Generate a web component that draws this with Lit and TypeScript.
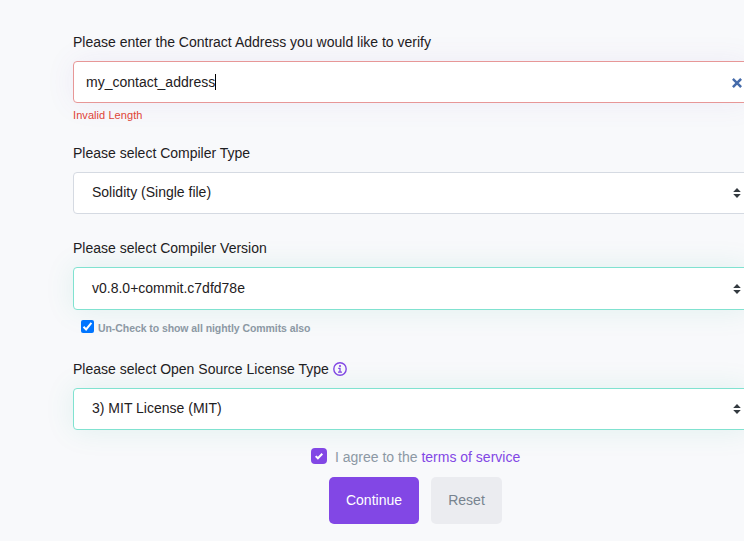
import { LitElement, html, css } from "lit";
import { customElement } from "lit/decorators.js";

@customElement("app-root")
export class AppRoot extends LitElement {
  static styles = css`
    :host { display: block; width: 100%; height: 541px; overflow: hidden; background: #f8f9fb; font: 14px/20px "Liberation Sans", Arial, sans-serif; color: #1e2022; }
    * { box-sizing: border-box; }
    form { display: flex; flex-direction: column; width: 677px; margin-left: 73px; padding-top: 32px; }
    .label { display: flex; align-items: center; height: 20px; white-space: nowrap; }
    .t { white-space: nowrap; }
    .box { display: flex; align-items: center; justify-content: space-between; height: 42px; margin-top: 9px; border: 1px solid #d5dae2; border-radius: 4px; background: #fff; padding: 0 8px 0 18px; white-space: nowrap; }
    .box svg { flex: none; }
    .choice { padding-bottom: 2px; }
    .address { padding: 0 7px 0 12px; border-color: #e79797; box-shadow: 0 0 30px rgba(119, 80, 190, 0.08); }
    .clear { margin-top: 2px; }
    .value { display: flex; align-items: center; }
    .caret { width: 1px; height: 16px; background: #000; }
    .valid { border-color: #80e2d0; box-shadow: 0 0 30px rgba(0, 160, 125, 0.1); }
    .version { height: 43px; }
    .error { height: 16px; margin: 4px 0 20px; font-size: 11px; line-height: 16px; letter-spacing: 0.07px; color: #de4437; }
    .type { margin-bottom: 24px; }
    .nightly { display: flex; align-items: center; gap: 4px; height: 16px; margin: 9px 0 24px 8px; font-size: 10.5px; letter-spacing: -0.07px; font-weight: 700; color: #8c98a4; }
    .nightly svg { margin-top: -1px; }
    .nightly .t { padding-top: 2px; }
    .info { margin-left: 4px; }
    .agree { display: flex; align-items: center; gap: 8px; height: 20px; margin: 17px 0 0 238px; color: #8c98a4; }
    .agree .tick { margin-top: -2px; }
    a { color: #8247e5; }
    .actions { display: flex; gap: 12px; margin: 10px 0 0 256px; }
    button { height: 47px; border: 0; border-radius: 5px; padding: 0 0 2px; font: inherit; }
    .primary { width: 90px; background: #8247e5; color: #fff; }
    .secondary { width: 71px; background: #ebecf0; color: #77838f; }
  `;

  private select(text: string, kind: string) {
    return html`<div class="box ${kind}">
      <span class="choice">${text}</span>
      <svg width="8" height="12" viewBox="0 0 8 12"><path fill="#343a40" d="M4 1 .2 5.1h7.6zM4 11 .2 6.9h7.6z" /></svg>
    </div>`;
  }

  render() {
    return html`
      <form>
        <div class="label">Please enter the Contract Address you would like to verify</div>
        <div class="box address">
          <span class="value">my_contact_address<i class="caret"></i></span>
          <svg class="clear" width="10" height="10" viewBox="0 0 10 10"><path d="m1.8 1.8 6.4 6.4m0-6.4-6.4 6.4" stroke="#456baa" stroke-width="2.5" stroke-linecap="square" /></svg>
        </div>
        <div class="error">Invalid Length</div>
        <div class="label">Please select Compiler Type</div>
        ${this.select("Solidity (Single file)", "type")}
        <div class="label">Please select Compiler Version</div>
        ${this.select("v0.8.0+commit.c7dfd78e", "valid version")}
        <div class="nightly">
          <svg width="13" height="13" viewBox="0 0 13 13"><rect width="13" height="13" rx="2" fill="#0075ff" /><path d="m2.5 6.8 2.6 2.6 5.3-6.5" fill="none" stroke="#fff" stroke-width="2" /></svg>
          <span class="t">Un-Check to show all nightly Commits also</span>
        </div>
        <div class="label">
          <span class="t">Please select Open Source License Type</span>
          <svg class="info" width="14" height="14" viewBox="0 0 14 14"><circle cx="7" cy="7" r="6.2" fill="none" stroke="#8247e5" stroke-width="1.4" /><circle cx="7" cy="4" r="1.1" fill="#8247e5" /><path d="M5.2 6.4h2M7 5.8v4.3M5 10.1h4" fill="none" stroke="#8247e5" stroke-width="1.3" /></svg>
        </div>
        ${this.select("3) MIT License (MIT)", "valid")}
        <div class="agree">
          <svg class="tick" width="16" height="16" viewBox="0 0 16 16"><rect width="16" height="16" rx="4" fill="#8247e5" /><path d="m4.7 8.1 2.2 2.2 4.4-4.5" fill="none" stroke="#fff" stroke-width="2" /></svg>
          <span class="t">I agree to the <a>terms of service</a></span>
        </div>
        <div class="actions"><button type="button" class="primary">Continue</button><button type="button" class="secondary">Reset</button></div>
      </form>
    `;
  }
}
